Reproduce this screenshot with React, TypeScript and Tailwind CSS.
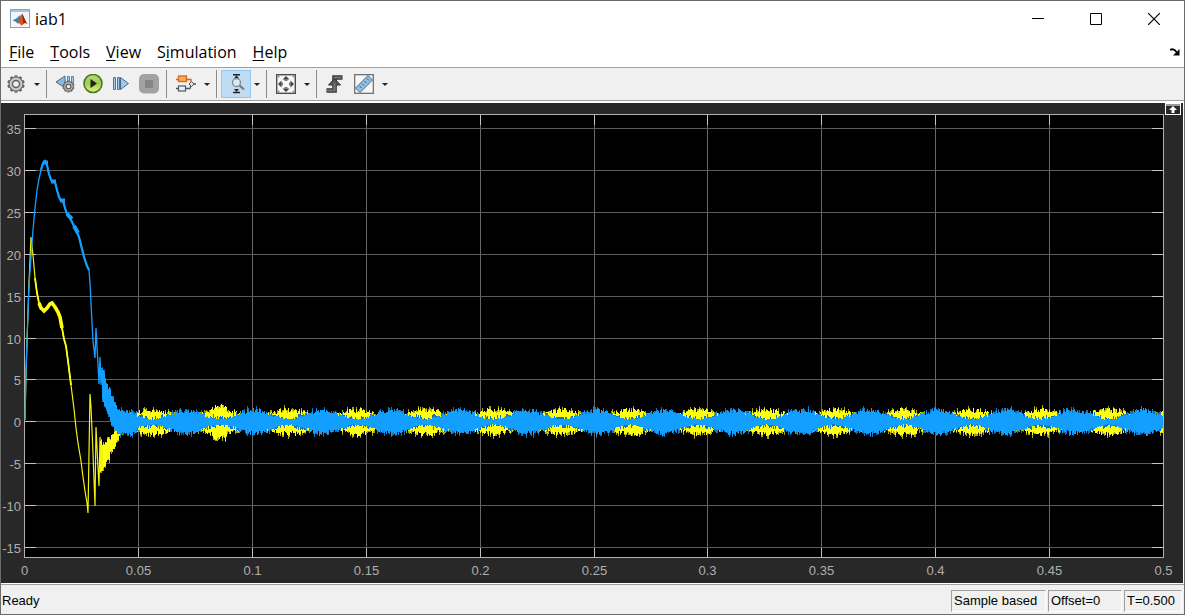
import { ReactNode } from 'react';

const CHART_W = 1182;
const CHART_H = 480;
const PLOT = { left: 23, right: 1162, top: 11, bottom: 454 };
const ZERO_Y = 318;

const X_TICKS = ['0', '0.05', '0.1', '0.15', '0.2', '0.25', '0.3', '0.35', '0.4', '0.45', '0.5'];
const Y_TICKS = [35, 30, 25, 20, 15, 10, 5, 0, -5, -10, -15];

const xAt = (t: number) => Math.round(PLOT.left + t * 2278) + 0.5;
const yAt = (v: number) => Math.round(318.3 - v * 8.38) + 0.5;

type Point = [number, number];

const BLUE_START: Point[] = [
  [24, 317], [25, 270], [26, 238], [28, 182], [30, 155], [32, 127], [34, 105], [36, 87], [38, 76], [40, 67], [42, 60],
  [44, 58], [46, 62], [48, 71], [50, 77], [52, 79], [54, 79], [56, 87], [58, 94], [60, 98], [62, 98], [64, 105],
  [66, 111], [69, 115], [72, 121], [75, 127], [78, 134], [80, 142], [83, 154], [86, 163], [88, 167], [89, 180],
  [90, 200], [91, 220], [92, 238], [94, 255], [95, 225], [97, 262], [98, 281], [99, 254], [100, 282], [101, 265], [102, 290],
];

const YELLOW_START: Point[] = [
  [24, 317], [25, 270], [26, 238], [28, 180], [30, 134], [32, 152], [34, 175], [36, 190], [38, 200], [40, 205],
  [43, 208], [46, 205], [49, 201], [51, 200], [54, 204], [57, 209], [59, 214], [61, 225], [63, 236], [65, 243],
  [67, 258], [70, 282], [73, 306], [75, 325], [77, 340], [80, 358], [82, 374], [84, 388], [86, 400], [87, 410],
  [89, 291], [90, 304], [92, 350], [94, 403], [95, 324], [97, 365], [98, 383], [99, 334], [100, 370], [101, 342], [102, 365],
];

// [x, top, bottom] of the decaying ripple after the start-up
const BLUE_BAND = [
  [101, 267, 294], [104, 276, 303], [107, 284, 312], [111, 295, 323], [116, 305, 329], [120, 308, 331], [128, 309, 331], [136, 310, 330],
];
const YELLOW_BAND = [
  [99, 339, 369], [103, 341, 363], [107, 337, 356], [112, 331, 346], [119, 324, 333], [124, 315, 326], [136, 311, 328],
];

const random = (seed: number) => {
  let s = seed;
  return () => {
    s = (s * 1664525 + 1013904223) % 4294967296;
    return s / 4294967296;
  };
};

const bandAt = (band: number[][], x: number) => {
  const i = Math.max(0, band.findIndex((b) => b[0] > x) - 1);
  const a = band[i];
  const b = band[i + 1];
  const f = (x - a[0]) / (b[0] - a[0]);
  return [a[1] + (b[1] - a[1]) * f, a[2] + (b[2] - a[2]) * f];
};

const line = (points: Point[]) => points.map(([x, y], i) => `${i ? 'L' : 'M'}${x} ${y}`).join('');

// One vertical stroke per column, plus a dimmer tip at either end.
const buildBand = (band: number[][], amplitude: (x: number) => number, seed: number) => {
  const rnd = random(seed);
  let body = '';
  let tips = '';
  for (let x = band[0][0]; x < PLOT.right; x++) {
    let top: number;
    let bottom: number;
    if (x < 136) {
      [top, bottom] = bandAt(band, x);
      const ripple = x < 110 ? 6 : 4;
      top += (rnd() - 0.5) * ripple;
      bottom += (rnd() - 0.5) * ripple;
    } else {
      const a = amplitude(x);
      top = ZERO_Y + 1 - a * (0.72 + rnd() * 0.4);
      bottom = ZERO_Y + 1 + a * (0.72 + rnd() * 0.4);
    }
    top = Math.round(top);
    bottom = Math.max(top + 2, Math.round(bottom));
    const topTip = Math.floor(rnd() ** 2 * 4);
    const bottomTip = Math.floor(rnd() ** 2 * 4);
    body += `M${x + 0.5} ${top}V${bottom}`;
    tips += `M${x + 0.5} ${top - topTip}V${bottom + bottomTip}`;
  }
  return { body, tips };
};

// Beat of the two currents, one lobe every 68 px
const beat = (x: number) => Math.sin((Math.PI * (x - 151)) / 68.3) ** 2;
const blueBand = buildBand(BLUE_BAND, (x) => 3 + 9.5 * beat(x), 7);
const yellowBand = buildBand(
  YELLOW_BAND,
  (x) => 6 + 7 * (1 - beat(x)) + (Math.abs(x - 218) < 8 ? 4 : 0),
  91
);

const ScopeChart = () => (
  <svg viewBox={`0 0 ${CHART_W} ${CHART_H}`} className="block w-full" role="img" aria-label="iab1">
    <rect width={CHART_W} height={CHART_H} fill="#282828" />
    <rect x="23" y="11" width="1140" height="444" fill="#000" />
    <g shapeRendering="crispEdges" fill="none">
      {X_TICKS.slice(1, -1).map((t) => (
        <g key={t}>
          <path d={`M${xAt(+t)} 11V455`} stroke="#686868" />
          <path d={`M${xAt(+t)} 11v11M${xAt(+t)} 455v-11`} stroke="#c4c4c4" />
        </g>
      ))}
      {Y_TICKS.map((v) => (
        <g key={v}>
          <path d={`M23 ${yAt(v)}H1163`} stroke="#5c5c5c" />
          <path d={`M23 ${yAt(v)}h12M1163 ${yAt(v)}h-12`} stroke="#c4c4c4" />
        </g>
      ))}
      <rect x="23.5" y="11.5" width="1139" height="443" stroke="#b0b0b0" />
      <path d={yellowBand.tips} stroke="#a8a808" />
      <path d={yellowBand.body} stroke="#ffff11" />
    </g>
    <path d={line(YELLOW_START)} fill="none" stroke="#f2f211" strokeWidth="1.2" />
    <path d={line(YELLOW_START.slice(6, 22))} fill="none" stroke="#ffff11" strokeWidth="1.8" />
    <path d={line(YELLOW_START.slice(8, 18))} fill="none" stroke="#ffff11" strokeWidth="3.6" />
    <g shapeRendering="crispEdges" fill="none">
      <path d={blueBand.tips} stroke="#1272ba" />
      <path d={blueBand.body} stroke="#139fff" />
    </g>
    <path d={line(BLUE_START)} fill="none" stroke="#139fff" strokeWidth="1.3" />
    <path d={line(BLUE_START.slice(9, 31))} fill="none" stroke="#139fff" strokeWidth="2.2" />
    <path d="M42 59.500h5M50 78.500h5M59 97.500h5M66 111L71 116M73 123L77 130" fill="none" stroke="#139fff" strokeWidth="4" />
    <g fill="#afafaf" fontSize="13" fontFamily='"Liberation Sans", Arial, sans-serif'>
      {Y_TICKS.map((v) => (
        <text key={v} x="20" y={yAt(v) + 5.5} textAnchor="end">{v}</text>
      ))}
      {X_TICKS.map((t) => (
        <text key={t} x={xAt(+t)} y="472" textAnchor="middle">{t}</text>
      ))}
    </g>
  </svg>
);

const gearTeeth = [0, 36, 72, 108, 144, 180, 216, 252, 288, 324];

const Gear = ({ cx = 10, cy = 10, r = 7 }) => (
  <g>
    {gearTeeth.map((a) => (
      <rect key={a} x={cx - r / 5} y={cy - r * 1.25} width={r / 2.5} height={r * 0.5} fill="#6a6a6a" transform={`rotate(${a} ${cx} ${cy})`} />
    ))}
    <circle cx={cx} cy={cy} r={r} fill="#c9c9c9" stroke="#6a6a6a" strokeWidth="1.2" />
    <circle cx={cx} cy={cy} r={r * 0.5} fill="#f0f0f0" stroke="#5e5e5e" strokeWidth="1.4" />
  </g>
);

const Icon = ({ children }: { children: ReactNode }) => (
  <svg viewBox="0 0 20 20" className="size-5" aria-hidden="true">{children}</svg>
);

const ToolButton = ({ label, wide, active, disabled, children }: {
  label: string;
  wide?: boolean;
  active?: boolean;
  disabled?: boolean;
  children: ReactNode;
}) => (
  <button
    type="button"
    aria-label={label}
    disabled={disabled}
    className={`flex h-7 items-center justify-center ${wide ? 'w-[30px]' : 'w-7'} ${active ? 'border border-[#90c8f6] bg-[#bedcf4]' : ''}`}
  >
    <Icon>{children}</Icon>
  </button>
);

const Caret = ({ label }: { label: string }) => (
  <button type="button" aria-label={label} className="flex h-7 w-3 items-center justify-center">
    <svg viewBox="0 0 6 3" className="h-[3px] w-1.5"><path d="M0 0h6L3 3z" fill="#222" /></svg>
  </button>
);

const Separator = () => <div className="mr-1 ml-[3px] h-7 w-px bg-[#8c8c8c]" />;

const Toolbar = () => (
  <div className="flex h-[34px] items-center border-y border-[#a0a0a0] bg-[#f0f0f0]">
    <ToolButton label="Configuration Properties" wide><Gear /></ToolButton>
    <Caret label="Configuration menu" />
    <Separator />
    <ToolButton label="Step Back">
      <path d="M10 2v12L1 8z" fill="#8db9dc" stroke="#3f6c92" />
      <path d="M12.5 2.5h2v6h-2zM16.500 2.500h2v7h-2z" fill="#a9cde8" stroke="#3f6c92" strokeWidth=".8" />
      <Gear cx={13.500} cy={12.500} r={4.800} />
    </ToolButton>
    <ToolButton label="Run">
      <defs>
        <linearGradient id="run" x1="0" y1="0" x2="0" y2="1">
          <stop offset="0" stopColor="#b9d67c" />
          <stop offset=".5" stopColor="#9ed04b" />
          <stop offset="1" stopColor="#d9f58e" />
        </linearGradient>
      </defs>
      <circle cx="10" cy="9.500" r="9" fill="url(#run)" stroke="#4c7620" strokeWidth="1.6" />
      <path d="M7.500 5v9l6.500-4.500z" fill="#222" />
    </ToolButton>
    <ToolButton label="Step Forward">
      <path d="M2.500 3.500h2v12h-2zM6.500 3.500h2v12h-2z" fill="#a9cde8" stroke="#4a7496" />
      <path d="M9.500 3.500v12l8-6z" fill="#a3c8e5" stroke="#3f6c92" />
    </ToolButton>
    <ToolButton label="Stop" disabled>
      <rect x="0" y="0" width="20" height="19.500" rx="5" fill="#a2a2a2" />
      <rect x="6" y="6" width="8" height="8" fill="#858585" />
    </ToolButton>
    <Separator />
    <ToolButton label="Highlight Block" wide>
      <path d="M0 5.500h3M10 5.500h5v3" fill="none" stroke="#c96a18" strokeWidth="1.3" />
      <path d="M0 14.500h3M9 14.500h5l1-3M17 10h3" fill="none" stroke="#555" strokeWidth="1.3" />
      <rect x="2.500" y="2" width="8" height="5.500" fill="#f7ad60" stroke="#d86e12" strokeWidth="1.4" />
      <rect x="2.500" y="12" width="7" height="5" fill="#e6f1f8" stroke="#4f5b63" strokeWidth="1.2" />
      <path d="M15.500 7.500L18 10l-2.500 2.500L13 10z" fill="#d7e7f1" stroke="#555" />
    </ToolButton>
    <Caret label="Highlight menu" />
    <Separator />
    <ToolButton label="Scale Y-Axis" wide active>
      <path d="M7 .8h7M7 18.500h7" stroke="#222" strokeWidth="1.5" />
      <path d="M8 4.500h5l-2.500-3.500zM8 15h5l-2.500 3z" fill="#222" />
      <path d="M13 11l5 4.500" stroke="#777" strokeWidth="2.2" />
      <circle cx="10.500" cy="8.500" r="4" fill="#d9ebf7" stroke="#888" strokeWidth="1.3" />
    </ToolButton>
    <Caret label="Scale menu" />
    <Separator />
    <ToolButton label="Fit to View" wide>
      <rect x=".7" y=".7" width="18.600" height="18.600" fill="#f7f7f7" stroke="#4b4b4b" strokeWidth="1.4" />
      <path d="M10 2l3.500 3.500h-7zM10 18l3.500-3.500h-7zM2 10l3.500-3.500v7zM18 10l-3.500-3.500v7z" fill="#444" />
      <path d="M8.500 5h3v2h-3zM8.500 13h3v2h-3zM5 8.500h2v3H5zM13 8.500h2v3h-2z" fill="#777" />
      <path d="M2 2h2L2 4zM18 2v2l-2-2zM2 18v-2l2 2zM18 18h-2l2-2z" fill="#888" />
    </ToolButton>
    <Caret label="Fit menu" />
    <Separator />
    <ToolButton label="Triggers">
      <path d="M1.500 16.500h8V3.500h8" fill="none" stroke="#333" strokeWidth="4.600" />
      <path d="M1.500 16.500h8V3.500h7" fill="none" stroke="#777" strokeWidth="2" />
      <path d="M9.500 4.500l6 6.500H3.500z" fill="#555" stroke="#333" />
      <path d="M9.500 9v8" stroke="#777" strokeWidth="2" />
    </ToolButton>
    <ToolButton label="Measurements" wide>
      <rect x=".7" y=".7" width="18.600" height="18.600" fill="#f7f7f7" stroke="#666" strokeWidth="1.2" />
      <path d="M14 1.500l4.500 4.500L6 18.500 1.500 14z" fill="#94c1e0" stroke="#426a87" />
      <path d="M13 4.500l2 2M10.500 7l2 2M8 9.500l2 2M5.500 12l2 2" stroke="#315a78" />
    </ToolButton>
    <Caret label="Measurements menu" />
  </div>
);

const MENUS = [
  { before: '', key: 'F', after: 'ile' },
  { before: '', key: 'T', after: 'ools' },
  { before: '', key: 'V', after: 'iew' },
  { before: 'S', key: 'i', after: 'mulation' },
  { before: '', key: 'H', after: 'elp' },
];

const STATUS = [
  { text: 'Sample based', width: 'w-[95px]' },
  { text: 'Offset=0', width: 'w-[74px]' },
  { text: 'T=0.500', width: 'w-[58px]' },
];

const TitleBar = () => (
  <header className="flex h-9 items-center">
    <svg viewBox="0 0 20 20" className="ml-[9px] size-5" aria-hidden="true">
      <rect x=".5" y=".5" width="19" height="18" fill="#f3f6f8" stroke="#8ba0b0" />
      <path d="M1 1h18v2H1z" fill="#a9c4d8" />
      <path d="M2.500 11.500L7 9l3-3 1.500 4-4 4.500-2-2z" fill="#3f80ae" />
      <path d="M7.500 14.500c2-2 3-8 4.500-10 1.500 2 3 7 5.500 10.500-2-1.500-3-1.500-4 0-1 1-2 1.500-2.500 1.500-.5-2-2-2.500-3.500-2z" fill="#d9521c" />
      <path d="M12 4.500c1.500 2 3 7 5.500 10.500-2-1.500-3-1.500-4 0-.5-4-1-7-1.500-10.500z" fill="#8f2713" />
    </svg>
    <h1 className="ml-[5px] flex-1 text-base">iab1</h1>
    <button type="button" aria-label="Minimize" className="flex h-9 w-[58px] items-center justify-center">
      <svg viewBox="0 0 12 12" className="size-3"><path d="M0 5.500h12" stroke="#000" /></svg>
    </button>
    <button type="button" aria-label="Maximize" className="flex h-9 w-[58px] items-center justify-center">
      <svg viewBox="0 0 12 12" className="size-3"><path d="M.5.5h11v11H.5z" fill="none" stroke="#000" /></svg>
    </button>
    <button type="button" aria-label="Close" className="mr-px flex h-9 w-[58px] items-center justify-center">
      <svg viewBox="0 0 12 12" className="size-3"><path d="M0 0l12 12M12 0L0 12" stroke="#000" strokeWidth="1.200" /></svg>
    </button>
  </header>
);

const App = () => (
  <div className="flex min-h-screen flex-col border border-[#6b6b6b] bg-white font-['Open_Sans','Noto_Sans',sans-serif] text-black">
    <TitleBar />
    <nav className="flex h-[30px] items-center gap-4 pr-1 pl-2 text-base">
      {MENUS.map((m) => (
        <button key={m.key} type="button">
          {m.before}<span className="underline underline-offset-2">{m.key}</span>{m.after}
        </button>
      ))}
      <button type="button" aria-label="Undock" className="ml-auto">
        <svg viewBox="0 0 10 8" className="h-2 w-2.5">
          <path d="M0 2C3 0 5 2 6.500 4" fill="none" stroke="#000" strokeWidth="1.800" />
          <path d="M9.500 1v6.500H3z" fill="#000" />
        </svg>
      </button>
    </nav>
    <Toolbar />
    <main className="relative mt-0.5 mr-px">
      <ScopeChart />
      <button type="button" aria-label="Maximize axes" className="absolute top-0 right-0.5 h-3 w-4 border border-white bg-[#282828]">
        <svg viewBox="0 0 14 10" className="block h-2.5 w-3.5">
          <path d="M0 1h14" stroke="#999" strokeWidth="2" />
          <path d="M7 2l4 4H8.500v3h-3V6H3z" fill="#fff" />
        </svg>
      </button>
    </main>
    <footer className="mt-px flex flex-1 items-center border-t border-[#a0a0a0] bg-[#f0f0f0] pt-1 pr-0.5 pb-0.5 font-['Liberation_Sans',Arial,sans-serif] text-[13px]">
      <span className="flex-1 pl-px">Ready</span>
      <div className="flex gap-0.5">
        {STATUS.map((s) => (
          <span key={s.text} className={`h-[22px] border border-t-[#a0a0a0] border-r-white border-b-white border-l-[#a0a0a0] pl-0.5 leading-5 whitespace-nowrap ${s.width}`}>
            {s.text}
          </span>
        ))}
      </div>
    </footer>
  </div>
);

export default App;
